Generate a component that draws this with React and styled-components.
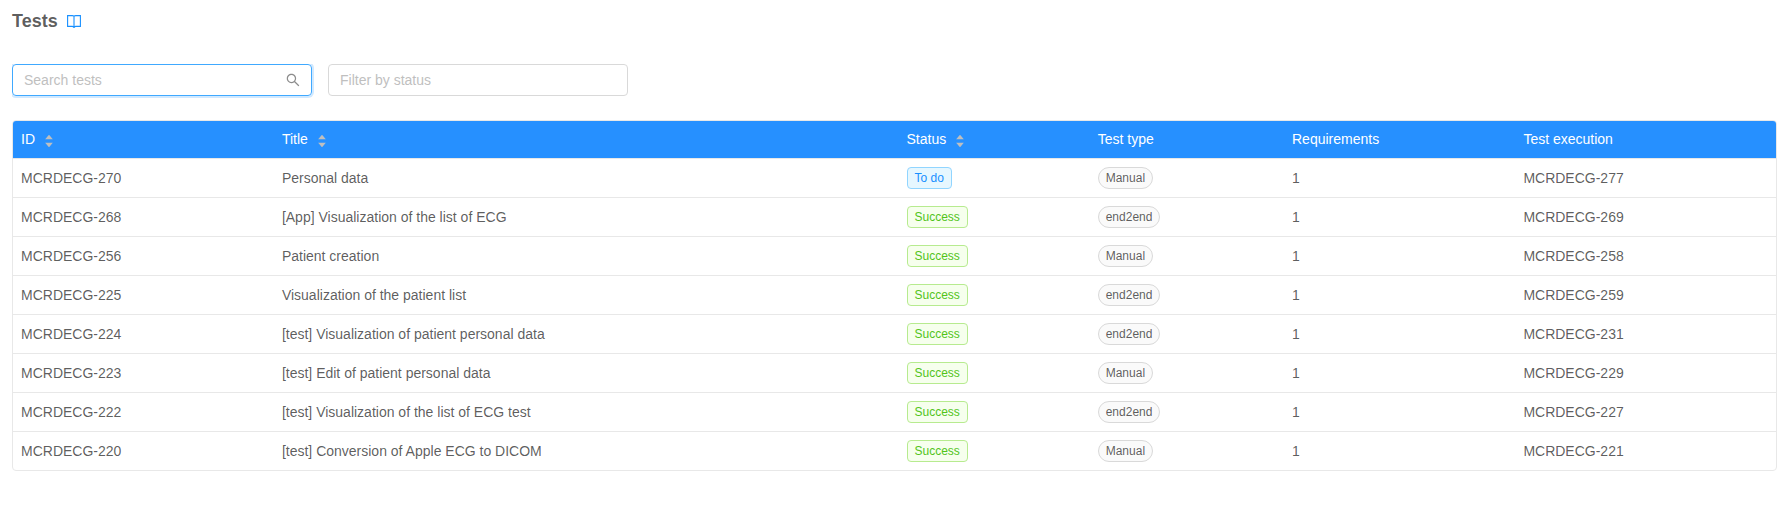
import React from "react";
import styled, { createGlobalStyle } from "styled-components";

const GlobalStyle = createGlobalStyle`
  *, *::before, *::after { box-sizing: border-box; }
  body {
    margin: 0;
    background: #fff;
    color: rgba(0, 0, 0, 0.65);
    font-family: "Liberation Sans", Arial, sans-serif;
    font-size: 14px;
    line-height: 1.5;
  }
`;

const Page = styled.main`
  padding: 0 14px 0 12px;
`;

const Heading = styled.header`
  display: flex;
  align-items: center;
  gap: 9px;
  height: 42px;
  margin-bottom: 22px;
`;

const Title = styled.h1`
  margin: 0;
  font-size: 18px;
  line-height: 27px;
  font-weight: 700;
`;

const GuideLink = styled.a`
  display: flex;
  color: #1890ff;
`;

const Filters = styled.div`
  display: flex;
  gap: 16px;
  margin-bottom: 24px;
`;

const Field = styled.label`
  display: flex;
  align-items: center;
  width: 300px;
  height: 32px;
  padding: 0 11px;
  border: 1px solid ${(p) => (p.$active ? "#40a9ff" : "#d9d9d9")};
  border-radius: 4px;
  box-shadow: ${(p) => (p.$active ? "0 0 0 2px rgba(24, 144, 255, 0.2)" : "none")};
  clip-path: inset(0 -2px -2px 0);
`;

const Input = styled.input`
  flex: 1;
  min-width: 0;
  padding: 0;
  border: 0;
  outline: 0;
  background: transparent;
  color: inherit;
  font: inherit;
  &::placeholder { color: #bfbfbf; opacity: 1; }
`;

const TableFrame = styled.div`
  border: 1px solid #e8e8e8;
  border-radius: 4px;
  overflow: hidden;
`;

const Table = styled.table`
  width: 100%;
  table-layout: fixed;
  border-collapse: separate;
  border-spacing: 0;
`;

const Column = styled.col`
  width: ${(p) => p.$width}px;
`;

const HeadCell = styled.th`
  height: 38px;
  padding: 0 8px;
  border-bottom: 1px solid #e8e8e8;
  background: #2690ff;
  color: #fff;
  font-weight: 400;
  text-align: left;
`;

const HeadLabel = styled.div`
  display: flex;
  align-items: center;
  gap: 8px;
`;

const Cell = styled.td`
  height: 39px;
  padding: 0 8px;
  border-bottom: 1px solid #e8e8e8;
  white-space: nowrap;
  tr:last-child > & {
    height: 38px;
    border-bottom: 0;
  }
`;

const tones = {
  todo: ["#1890ff", "#e6f7ff", "#91d5ff"],
  success: ["#52c41a", "#f6ffed", "#b7eb8f"],
  plain: ["rgba(0, 0, 0, 0.65)", "#fafafa", "#d9d9d9"],
};

const Tag = styled.span`
  display: block;
  width: fit-content;
  height: 22px;
  padding: 0 7px;
  border: 1px solid ${(p) => tones[p.$tone][2]};
  border-radius: ${(p) => (p.$round ? 11 : 4)}px;
  background: ${(p) => tones[p.$tone][1]};
  color: ${(p) => tones[p.$tone][0]};
  font-size: 12px;
  line-height: 20px;
`;

const SorterStack = styled.span`
  display: flex;
  flex-direction: column;
  color: #bfbfbf;
  padding-top: 3px;
`;

const BookIcon = () => (
  <svg width="14" height="14" viewBox="0 0 14 14" fill="none" stroke="currentColor" strokeWidth="1.1">
    <path d="M7 2.200Q6.300 1.600 5.200 1.600H.6V12.400H5.200Q6.300 12.400 7 13.300Q7.700 12.400 8.800 12.400H13.400V1.600H8.800Q7.700 1.600 7 2.200V13.900" />
  </svg>
);

const SearchIcon = () => (
  <svg width="14" height="14" viewBox="64 64 896 896" fill="rgba(0,0,0,0.45)">
    <path d="M909.600 854.500L649.900 594.800C690.200 542.700 712 479 712 412c0-80.200-31.300-155.400-87.900-212.100-56.600-56.700-132-87.900-212.100-87.900s-155.500 31.300-212.100 87.900C143.200 256.500 112 331.800 112 412c0 80.100 31.300 155.500 87.900 212.100C256.500 680.800 331.800 712 412 712c67 0 130.600-21.800 182.700-62l259.700 259.600a8.200 8.200 0 0 0 11.600 0l43.600-43.500a8.200 8.200 0 0 0 0-11.600zM570.400 570.400C528 612.700 471.800 636 412 636s-116-23.300-158.400-65.600C211.300 528 188 471.800 188 412s23.300-116.100 65.600-158.400C296 211.300 352.200 188 412 188s116.100 23.200 158.400 65.600S636 352.200 636 412s-23.300 116.100-65.600 158.400z" />
  </svg>
);

const Sorter = () => (
  <SorterStack>
    <svg width="12" height="14" viewBox="0 0 12 14" fill="currentColor">
      <path d="M2.200 5.200 5.500 1.300Q6 .8 6.500 1.300L9.800 5.200Z" />
      <path d="M2.200 8.800 5.500 12.700Q6 13.200 6.500 12.700L9.800 8.800Z" />
    </svg>
  </SorterStack>
);

const columns = [
  { label: "ID", width: 260.9, sortable: true },
  { label: "Title", width: 624.6, sortable: true },
  { label: "Status", width: 191.2, sortable: true },
  { label: "Test type", width: 194.3 },
  { label: "Requirements", width: 231.4 },
  { label: "Test execution", width: 260.6 },
];

const tests = [
  ["MCRDECG-270", "Personal data", "To do", "Manual", "1", "MCRDECG-277"],
  ["MCRDECG-268", "[App] Visualization of the list of ECG", "Success", "end2end", "1", "MCRDECG-269"],
  ["MCRDECG-256", "Patient creation", "Success", "Manual", "1", "MCRDECG-258"],
  ["MCRDECG-225", "Visualization of the patient list", "Success", "end2end", "1", "MCRDECG-259"],
  ["MCRDECG-224", "[test] Visualization of patient personal data", "Success", "end2end", "1", "MCRDECG-231"],
  ["MCRDECG-223", "[test] Edit of patient personal data", "Success", "Manual", "1", "MCRDECG-229"],
  ["MCRDECG-222", "[test] Visualization of the list of ECG test", "Success", "end2end", "1", "MCRDECG-227"],
  ["MCRDECG-220", "[test] Conversion of Apple ECG to DICOM", "Success", "Manual", "1", "MCRDECG-221"],
];

export default function App() {
  return (
    <Page>
      <GlobalStyle />
      <Heading>
        <Title>Tests</Title>
        <GuideLink aria-label="Guide"><BookIcon /></GuideLink>
      </Heading>
      <Filters>
        <Field $active>
          <Input placeholder="Search tests" />
          <SearchIcon />
        </Field>
        <Field>
          <Input placeholder="Filter by status" />
        </Field>
      </Filters>
      <TableFrame>
        <Table>
          <colgroup>
            {columns.map((c) => <Column key={c.label} $width={c.width} />)}
          </colgroup>
          <thead>
            <tr>
              {columns.map((c) => (
                <HeadCell key={c.label}>
                  <HeadLabel>{c.label}{c.sortable && <Sorter />}</HeadLabel>
                </HeadCell>
              ))}
            </tr>
          </thead>
          <tbody>
            {tests.map(([id, title, status, type, requirements, execution]) => (
              <tr key={id}>
                <Cell>{id}</Cell>
                <Cell>{title}</Cell>
                <Cell><Tag $tone={status === "Success" ? "success" : "todo"}>{status}</Tag></Cell>
                <Cell><Tag $tone="plain" $round>{type}</Tag></Cell>
                <Cell>{requirements}</Cell>
                <Cell>{execution}</Cell>
              </tr>
            ))}
          </tbody>
        </Table>
      </TableFrame>
    </Page>
  );
}
